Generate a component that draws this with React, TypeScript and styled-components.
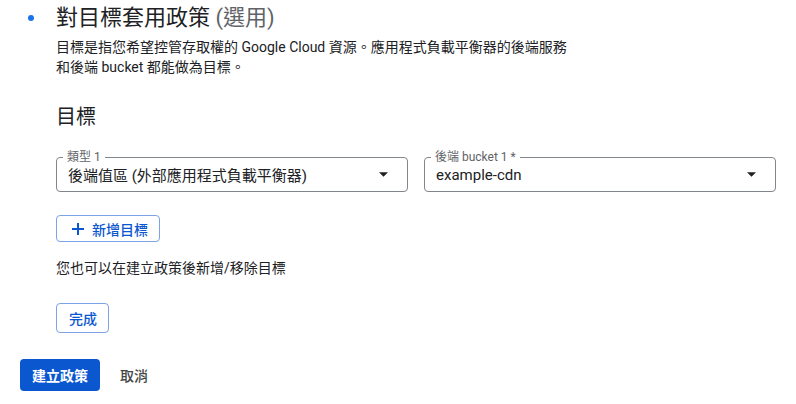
import React, { FunctionComponent } from 'react';
import styled, { createGlobalStyle } from 'styled-components';

const GlobalStyle = createGlobalStyle`
  body {
    margin: 0;
    background: #ffffff;
    font-family: Roboto, "Noto Sans CJK TC", sans-serif;
    color: #1f1f1f;
  }
`;

const S = {
  Page: styled.div`
    width: 796px;
    height: 404px;
    box-sizing: border-box;
    padding: 4px 20px 0 20px;
    overflow: hidden;
  `,

  Step: styled.div`
    display: flex;
    align-items: flex-start;
  `,

  BulletCol: styled.div`
    width: 36px;
    height: 28px;
    display: flex;
    align-items: center;
    padding-left: 8px;
    box-sizing: border-box;
  `,

  Dot: styled.span`
    width: 6px;
    height: 6px;
    border-radius: 50%;
    background: #1a73e8;
  `,

  Body: styled.div`
    flex: 1;
    display: flex;
    flex-direction: column;
    align-items: flex-start;
  `,

  Title: styled.h2`
    margin: 0;
    font-size: 22px;
    line-height: 28px;
    font-weight: 400;
    color: #202124;
  `,

  Optional: styled.span`
    color: #5f6368;
  `,

  Description: styled.p`
    margin: 5px 0 0;
    font-size: 14px;
    line-height: 20px;
    color: #202124;
  `,

  Heading: styled.h3`
    margin: 26px 0 0;
    font-size: 20px;
    line-height: 28px;
    font-weight: 400;
    color: #202124;
  `,

  FieldRow: styled.div`
    align-self: stretch;
    display: grid;
    grid-template-columns: 1fr 1fr;
    gap: 16px;
    margin-top: 26px;
  `,

  Select: styled.div`
    position: relative;
    height: 35px;
    box-sizing: border-box;
    border: 1px solid #80868b;
    border-radius: 4px;
    display: flex;
    align-items: center;
    padding: 0 19px 0 11px;
  `,

  FloatLabel: styled.span`
    position: absolute;
    top: -8px;
    left: 6px;
    padding: 0 4px;
    background: #ffffff;
    font-size: 12px;
    line-height: 14px;
    color: #5f6368;
  `,

  Value: styled.span`
    flex: 1;
    font-size: 15px;
    color: #202124;
  `,

  OutlineButton: styled.button<{ $h: number; $top: number; $left: number }>`
    display: inline-flex;
    align-items: center;
    gap: 8px;
    height: ${(p) => p.$h}px;
    margin-top: ${(p) => p.$top}px;
    box-sizing: border-box;
    padding: 0 11px 0 ${(p) => p.$left}px;
    border: 1px solid #7da2e6;
    border-radius: 4px;
    background: #ffffff;
    color: #0b57d0;
    font-family: inherit;
    font-size: 14px;
    font-weight: 500;
    cursor: pointer;
  `,

  Hint: styled.p`
    margin: 16px 0 0;
    font-size: 14px;
    line-height: 20px;
    color: #202124;
  `,

  Actions: styled.div`
    display: flex;
    align-items: center;
    gap: 12px;
    margin-top: 26px;
  `,

  PrimaryButton: styled.button`
    height: 32px;
    padding: 0 12px;
    border: none;
    border-radius: 4px;
    background: #0b57d0;
    color: #ffffff;
    font-family: inherit;
    font-size: 14px;
    font-weight: 600;
    cursor: pointer;
  `,

  TextButton: styled.button`
    height: 32px;
    padding: 0 8px;
    border: none;
    background: transparent;
    color: #444746;
    font-family: inherit;
    font-size: 14px;
    font-weight: 500;
    cursor: pointer;
  `,
};

const DropArrow: FunctionComponent = () => (
  <svg width="9" height="5" viewBox="0 0 10 5">
    <path d="M0 0 L5 5 L10 0 Z" fill="#202124" />
  </svg>
);

const PlusIcon: FunctionComponent = () => (
  <svg width="12" height="12" viewBox="0 0 12 12">
    <path d="M6 0 V12 M0 6 H12" stroke="#0b57d0" strokeWidth="2" />
  </svg>
);

const App: FunctionComponent = () => (
  <S.Page>
    <GlobalStyle />
    <S.Step>
      <S.BulletCol>
        <S.Dot />
      </S.BulletCol>
      <S.Body>
        <S.Title>
          對目標套用政策 <S.Optional>(選用)</S.Optional>
        </S.Title>
        <S.Description>
          目標是指您希望控管存取權的 Google Cloud 資源。應用程式負載平衡器的後端服務
          <br />
          和後端 bucket 都能做為目標。
        </S.Description>

        <S.Heading>目標</S.Heading>

        <S.FieldRow>
          <S.Select>
            <S.FloatLabel>類型 1</S.FloatLabel>
            <S.Value>後端值區 (外部應用程式負載平衡器)</S.Value>
            <DropArrow />
          </S.Select>
          <S.Select>
            <S.FloatLabel>後端 bucket 1 *</S.FloatLabel>
            <S.Value>example-cdn</S.Value>
            <DropArrow />
          </S.Select>
        </S.FieldRow>

        <S.OutlineButton $h={27} $top={23} $left={15}>
          <PlusIcon />
          新增目標
        </S.OutlineButton>

        <S.Hint>您也可以在建立政策後新增/移除目標</S.Hint>

        <S.OutlineButton $h={30} $top={25} $left={12}>
          完成
        </S.OutlineButton>
      </S.Body>
    </S.Step>

    <S.Actions>
      <S.PrimaryButton>建立政策</S.PrimaryButton>
      <S.TextButton>取消</S.TextButton>
    </S.Actions>
  </S.Page>
);

export default App;
